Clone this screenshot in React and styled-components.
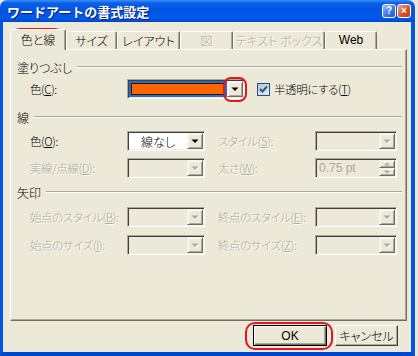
import styled, { createGlobalStyle } from "styled-components";

const GlobalStyle = createGlobalStyle`
  html, body {
    margin: 0;
    padding: 0;
    background: #ece9d8;
  }
  body {
    font-family: "Noto Sans CJK JP", "Noto Sans", sans-serif;
    font-size: 12px;
    font-weight: 300;
    font-feature-settings: "palt";
    color: #000;
  }
`;

const Frame = styled.div`
  position: relative;
  width: 415px;
  height: 356px;
  display: flex;
  flex-direction: column;
  background: #ece9d8;
  border-radius: 7px 7px 0 0;
  overflow: hidden;
`;

const TitleBar = styled.div`
  flex: none;
  height: 22px;
  display: flex;
  align-items: center;
  gap: 1px;
  padding: 0 4px 0 7px;
  background: linear-gradient(
    #3d8ff7 0%,
    #0a60ea 14%,
    #0054e3 45%,
    #0059eb 85%,
    #0045c8 100%
  );
`;

const Title = styled.span`
  flex: 1;
  color: #fff;
  font-size: 13px;
  font-weight: bold;
  font-feature-settings: normal;
  text-shadow: 1px 1px #0a1e70;
  white-space: nowrap;
`;

const CaptionButton = styled.div`
  box-sizing: border-box;
  width: 14px;
  height: 14px;
  display: flex;
  align-items: center;
  justify-content: center;
  border: 1px solid #fff;
  border-radius: 3px;
  background: ${(p) =>
    p.$close
      ? "linear-gradient(135deg, #f0a48c, #d9532b 55%, #c23a12)"
      : "linear-gradient(135deg, #9cc0fa, #3d78e8 55%, #2458cf)"};
  color: #fff;
  font-family: "Liberation Sans", sans-serif;
  font-size: 10px;
  font-weight: bold;
  line-height: 1;
`;

const Body = styled.div`
  flex: 1;
  display: flex;
  flex-direction: column;
  padding: 7px 4px 6px 7px;
  border-left: 3px solid #0055e5;
  border-right: 4px solid #0055e5;
  border-bottom: 4px solid #0046d0;
`;

const TabStrip = styled.div`
  position: relative;
  z-index: 1;
  display: flex;
  align-items: flex-end;
  height: 21px;
  margin-bottom: -1px;
`;

const Tab = styled.div`
  box-sizing: border-box;
  width: ${(p) => p.$w}px;
  height: ${(p) => (p.$active ? 21 : 18)}px;
  margin-bottom: ${(p) => (p.$active ? 0 : 1)}px;
  display: flex;
  align-items: center;
  justify-content: center;
  padding-bottom: 1px;
  background: #ece9d8;
  border-top: 1px solid #fff;
  border-left: 1px solid #fff;
  border-right: 1px solid #716f64;
  box-shadow: inset -1px 0 #aca899;
  border-radius: 2px 2px 0 0;
  color: ${(p) => (p.$disabled ? "#aca899" : "#000")};
  text-shadow: ${(p) => (p.$disabled ? "1px 1px #fff" : "none")};
  font-family: ${(p) =>
    p.$latin ? '"Liberation Sans", sans-serif' : "inherit"};
  font-weight: ${(p) => (p.$latin ? 400 : 300)};
  white-space: nowrap;
`;

const Panel = styled.div`
  flex: 1;
  box-sizing: border-box;
  display: flex;
  flex-direction: column;
  padding: 10px 4px 0 6px;
  border: 1px solid;
  border-color: #fff #716f64 #716f64 #fff;
  box-shadow: inset -1px -1px #aca899;
`;

const Group = styled.div`
  display: flex;
  flex-direction: column;
  gap: ${(p) => p.$gap}px;
  margin-top: ${(p) => p.$mt || 0}px;
`;

const GroupHead = styled.div`
  display: flex;
  align-items: center;
  gap: 5px;
  height: 14px;
  white-space: nowrap;

  &::after {
    content: "";
    flex: 1;
    border-top: 1px solid #aca899;
    border-bottom: 1px solid #fff;
  }
`;

const Row = styled.div`
  display: grid;
  grid-template-columns: ${(p) => p.$cols || "97px 78px 110px 82px"};
  align-items: center;
  height: 20px;
  padding-left: 13px;
`;

const Label = styled.span`
  padding-left: ${(p) => p.$indent || 0}px;
  font-size: 11.5px;
  letter-spacing: -0.4px;
  color: ${(p) => (p.$disabled ? "#aca899" : "#000")};
  text-shadow: ${(p) => (p.$disabled ? "1px 1px #fff" : "none")};
  white-space: nowrap;

  u {
    text-decoration: underline;
    text-underline-offset: 1px;
  }
`;

const Combo = styled.div`
  box-sizing: border-box;
  height: 20px;
  display: flex;
  border: 1px solid;
  border-color: #aca899 #fff #fff #aca899;
  box-shadow: inset 1px 1px #404040, inset -1px -1px #f1efe2;
  padding: 1px;
  background: ${(p) => (p.$disabled ? "#ece9d8" : "#fff")};
`;

const ComboValue = styled.div`
  flex: 1;
  display: flex;
  align-items: center;
  justify-content: ${(p) => (p.$left ? "flex-start" : "center")};
  padding-left: ${(p) => (p.$left ? 2 : 0)}px;
  font-family: ${(p) =>
    p.$latin ? '"Liberation Sans", sans-serif' : "inherit"};
  font-weight: ${(p) => (p.$latin ? 400 : 300)};
  color: ${(p) => (p.$disabled ? "#aca899" : "#000")};
  white-space: nowrap;
`;

const SwatchWell = styled.div`
  flex: 1;
  display: flex;
  padding: 2px;
  background: #316ac5;
`;

const Swatch = styled.div`
  flex: 1;
  background: #ff6600;
  border: 1px solid #1a1a1a;
`;

const DropButton = styled.div`
  box-sizing: border-box;
  width: 16px;
  display: flex;
  align-items: center;
  justify-content: center;
  background: #ece9d8;
  border: 1px solid;
  border-color: #f1efe2 #716f64 #716f64 #f1efe2;
  box-shadow: inset 1px 1px #fff, inset -1px -1px #aca899;
`;

const SpinColumn = styled.div`
  width: 16px;
  display: flex;
  flex-direction: column;
`;

const SpinButton = styled(DropButton)`
  width: 16px;
  flex: 1;
`;

const CheckRow = styled.div`
  display: flex;
  align-items: center;
  gap: 4px;
`;

const CheckBox = styled.div`
  box-sizing: border-box;
  width: 13px;
  height: 13px;
  display: flex;
  align-items: center;
  justify-content: center;
  border: 1px solid #1c5180;
  background: linear-gradient(135deg, #b9c4d4, #e8ebf0);
`;

const ButtonRow = styled.div`
  display: flex;
  justify-content: flex-end;
  gap: 8px;
  margin-top: 4px;
  padding-right: 9px;
`;

const Button = styled.div`
  box-sizing: border-box;
  width: ${(p) => p.$w}px;
  height: 21px;
  display: flex;
  align-items: center;
  justify-content: center;
  background: #ece9d8;
  border: 1px solid;
  border-color: ${(p) =>
    p.$default ? "#000" : "#fff #404040 #404040 #fff"};
  box-shadow: ${(p) =>
    p.$default
      ? "inset 1px 1px #fff, inset -1px -1px #716f64, inset -2px -2px #aca899"
      : "inset -1px -1px #aca899"};
  font-family: ${(p) =>
    p.$latin ? '"Liberation Sans", sans-serif' : "inherit"};
  font-weight: ${(p) => (p.$latin ? 400 : 300)};
`;

const Mark = styled.div`
  position: absolute;
  left: ${(p) => p.$x}px;
  top: ${(p) => p.$y}px;
  width: ${(p) => p.$w}px;
  height: ${(p) => p.$h}px;
  box-sizing: border-box;
  border: 2px solid #e3141b;
  border-radius: ${(p) => p.$r || 9}px;
  pointer-events: none;
`;

const Arrow = ({ color = "#000", shadow = false }) => (
  <svg width="8" height="5" viewBox="0 0 8 5">
    {shadow && <path d="M1 1h7L4.5 5z" fill="#fff" />}
    <path d="M0.5 0.5h7L4 4z" fill={color} />
  </svg>
);

const SmallArrow = ({ up }) => (
  <svg width="6" height="4" viewBox="0 0 6 4">
    <path d={up ? "M0 3.5h6L3 0.5z" : "M0 0.5h6L3 3.5z"} fill="#aca899" />
  </svg>
);

const DisabledCombo = () => (
  <Combo $disabled>
    <ComboValue />
    <DropButton>
      <Arrow color="#aca899" shadow />
    </DropButton>
  </Combo>
);

const tabs = [
  { label: "色と線", w: 56, active: true },
  { label: "サイズ", w: 51 },
  { label: "レイアウト", w: 63 },
  { label: "図", w: 53, disabled: true },
  { label: "テキスト ボックス", w: 92, disabled: true },
  { label: "Web", w: 52, latin: true },
];

export default function App() {
  return (
    <>
      <GlobalStyle />
      <Frame>
        <TitleBar>
          <Title>ワードアートの書式設定</Title>
          <CaptionButton>?</CaptionButton>
          <CaptionButton $close>×</CaptionButton>
        </TitleBar>

        <Body>
          <TabStrip>
            {tabs.map((t) => (
              <Tab
                key={t.label}
                $w={t.w}
                $active={t.active}
                $disabled={t.disabled}
                $latin={t.latin}
              >
                {t.label}
              </Tab>
            ))}
          </TabStrip>

          <Panel>
            <Group $gap={5}>
              <GroupHead>塗りつぶし</GroupHead>
              <Row $cols="97px 118px 12px auto">
                <Label>
                  色(<u>C</u>):
                </Label>
                <Combo>
                  <SwatchWell>
                    <Swatch />
                  </SwatchWell>
                  <DropButton>
                    <Arrow />
                  </DropButton>
                </Combo>
                <span />
                <CheckRow>
                  <CheckBox>
                    <svg width="9" height="9" viewBox="0 0 9 9">
                      <path
                        d="M1 4l2.5 2.5L8 1.5"
                        stroke="#3a4f86"
                        strokeWidth="2"
                        fill="none"
                      />
                    </svg>
                  </CheckBox>
                  <Label>
                    半透明にする(<u>T</u>)
                  </Label>
                </CheckRow>
              </Row>
            </Group>

            <Group $gap={7} $mt={11}>
              <GroupHead>線</GroupHead>
              <Row>
                <Label>
                  色(<u>O</u>):
                </Label>
                <Combo>
                  <ComboValue>線なし</ComboValue>
                  <DropButton>
                    <Arrow />
                  </DropButton>
                </Combo>
                <Label $indent={13} $disabled>
                  スタイル(<u>S</u>):
                </Label>
                <DisabledCombo />
              </Row>
              <Row>
                <Label $disabled>
                  実線/点線(<u>D</u>):
                </Label>
                <DisabledCombo />
                <Label $indent={13} $disabled>
                  太さ(<u>W</u>):
                </Label>
                <Combo $disabled>
                  <ComboValue $left $latin $disabled>
                    0.75 pt
                  </ComboValue>
                  <SpinColumn>
                    <SpinButton>
                      <SmallArrow up />
                    </SpinButton>
                    <SpinButton>
                      <SmallArrow />
                    </SpinButton>
                  </SpinColumn>
                </Combo>
              </Row>
            </Group>

            <Group $gap={8} $mt={7}>
              <GroupHead>矢印</GroupHead>
              <Row>
                <Label $disabled>
                  始点のスタイル(<u>B</u>):
                </Label>
                <DisabledCombo />
                <Label $indent={13} $disabled>
                  終点のスタイル(<u>E</u>):
                </Label>
                <DisabledCombo />
              </Row>
              <Row>
                <Label $disabled>
                  始点のサイズ(<u>I</u>):
                </Label>
                <DisabledCombo />
                <Label $indent={13} $disabled>
                  終点のサイズ(<u>Z</u>):
                </Label>
                <DisabledCombo />
              </Row>
            </Group>
          </Panel>

          <ButtonRow>
            <Button $w={74} $default $latin>
              OK
            </Button>
            <Button $w={63}>キャンセル</Button>
          </ButtonRow>
        </Body>

        <Mark $x={10} $y={28} $w={55} $h={22} $r={10} />
        <Mark $x={223} $y={77} $w={24} $h={25} $r={8} />
        <Mark $x={245} $y={322} $w={88} $h={28} $r={10} />
      </Frame>
    </>
  );
}
